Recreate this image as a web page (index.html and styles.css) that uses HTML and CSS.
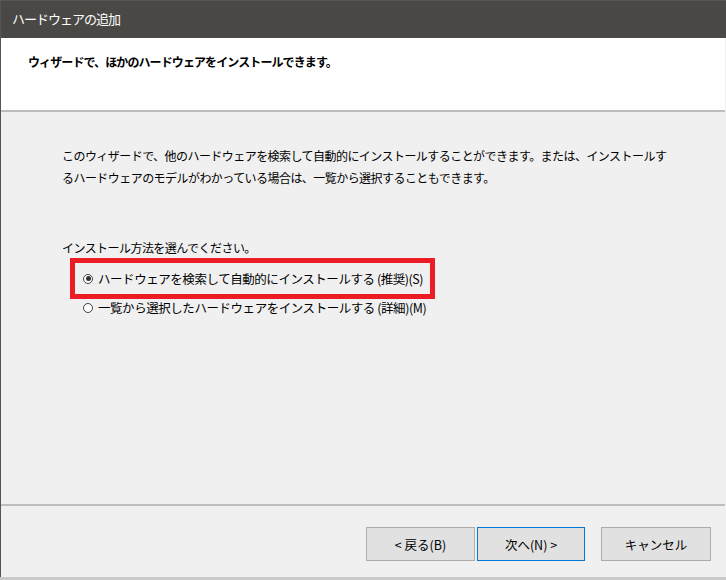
FILE: index.html
```
<!doctype html>
<html lang="ja">
<head>
	<meta charset="UTF-8">
	<title>ハードウェアの追加</title>
	<link rel="stylesheet" href="styles.css">
</head>
<body>
	<div class="window">
		<div class="titlebar">ハードウェアの追加</div>
		<div class="header">
			<h1 class="header-title">ウィザードで、ほかのハードウェアをインストールできます。</h1>
		</div>
		<div class="content">
			<p class="intro">このウィザードで、他のハードウェアを検索して自動的にインストールすることができます。または、インストールす<br>るハードウェアのモデルがわかっている場合は、一覧から選択することもできます。</p>
			<p class="prompt">インストール方法を選んでください。</p>
			<ul class="options">
				<li class="option option-marked"><span class="radio radio-checked"></span>ハードウェアを検索して自動的にインストールする (推奨)(S)</li>
				<li class="option"><span class="radio"></span>一覧から選択したハードウェアをインストールする (詳細)(M)</li>
			</ul>
		</div>
		<div class="footer">
			<button class="btn btn-back">&lt; 戻る(B)</button>
			<button class="btn btn-default">次へ(N) &gt;</button>
			<button class="btn btn-cancel">キャンセル</button>
		</div>
	</div>
</body>
</html>
```

FILE: styles.css
```
*{margin: 0;padding: 0;box-sizing: border-box;}
html,body{height: 100%;}
body{background: #c9c9c9;font-family: "Noto Sans CJK JP", "Noto Sans", sans-serif;color: #000;overflow: hidden;}

/*window*/
.window{width: 726px;height: 577px;display: flex;flex-direction: column;background: #f0f0f0;border-left: 1px solid #555;}
.titlebar{height: 38px;background: #4a4845;border-top: 1px solid #575653;color: #fff;font-size: 13px;letter-spacing: -1px;line-height: 36px;padding-left: 11px;}

/*header*/
.header{height: 74px;background: #fff;border-bottom: 2px solid #bdbdbd;margin-right: 1px;padding: 16px 0 0 27px;}
.header-title{font-size: 12px;font-weight: bold;letter-spacing: -0.9px;line-height: 16px;}

/*content*/
.content{flex: 1;border-bottom: 2px solid #bdbdbd;margin-right: 1px;padding: 33px 0 0 61px;font-size: 12px;letter-spacing: -0.55px;}
.intro{line-height: 22px;white-space: nowrap;}
.prompt{line-height: 20px;margin-top: 49px;}
.options{list-style: none;margin-left: 8px;font-size: 12.5px;letter-spacing: -0.45px;}
.option{display: flex;align-items: center;width: 365px;height: 18px;line-height: 18px;border-left: 5px solid transparent;padding-left: 8px;white-space: nowrap;}
.option-marked{height: 41px;border: 5px solid #ec1c24;}
.radio{width: 10px;height: 10px;border-radius: 50%;border: 1px solid #444;background: #fff;margin-right: 5px;display: flex;align-items: center;justify-content: center;flex-shrink: 0;}
.radio-checked::after{content: "";width: 5px;height: 5px;border-radius: 50%;background: #333;}

/*footer*/
.footer{height: 71px;display: flex;justify-content: flex-end;align-items: flex-start;padding: 21px 15px 0 0;}
.btn{height: 34px;width: 109px;background: #e1e1e1;border: 1px solid #adadad;font-family: inherit;font-size: 12.5px;color: #000;}
.btn-back{margin-right: 2px;}
.btn-default{width: 108px;border-color: #0078d7;margin-right: 16px;}
.btn-cancel{width: 110px;}
```
